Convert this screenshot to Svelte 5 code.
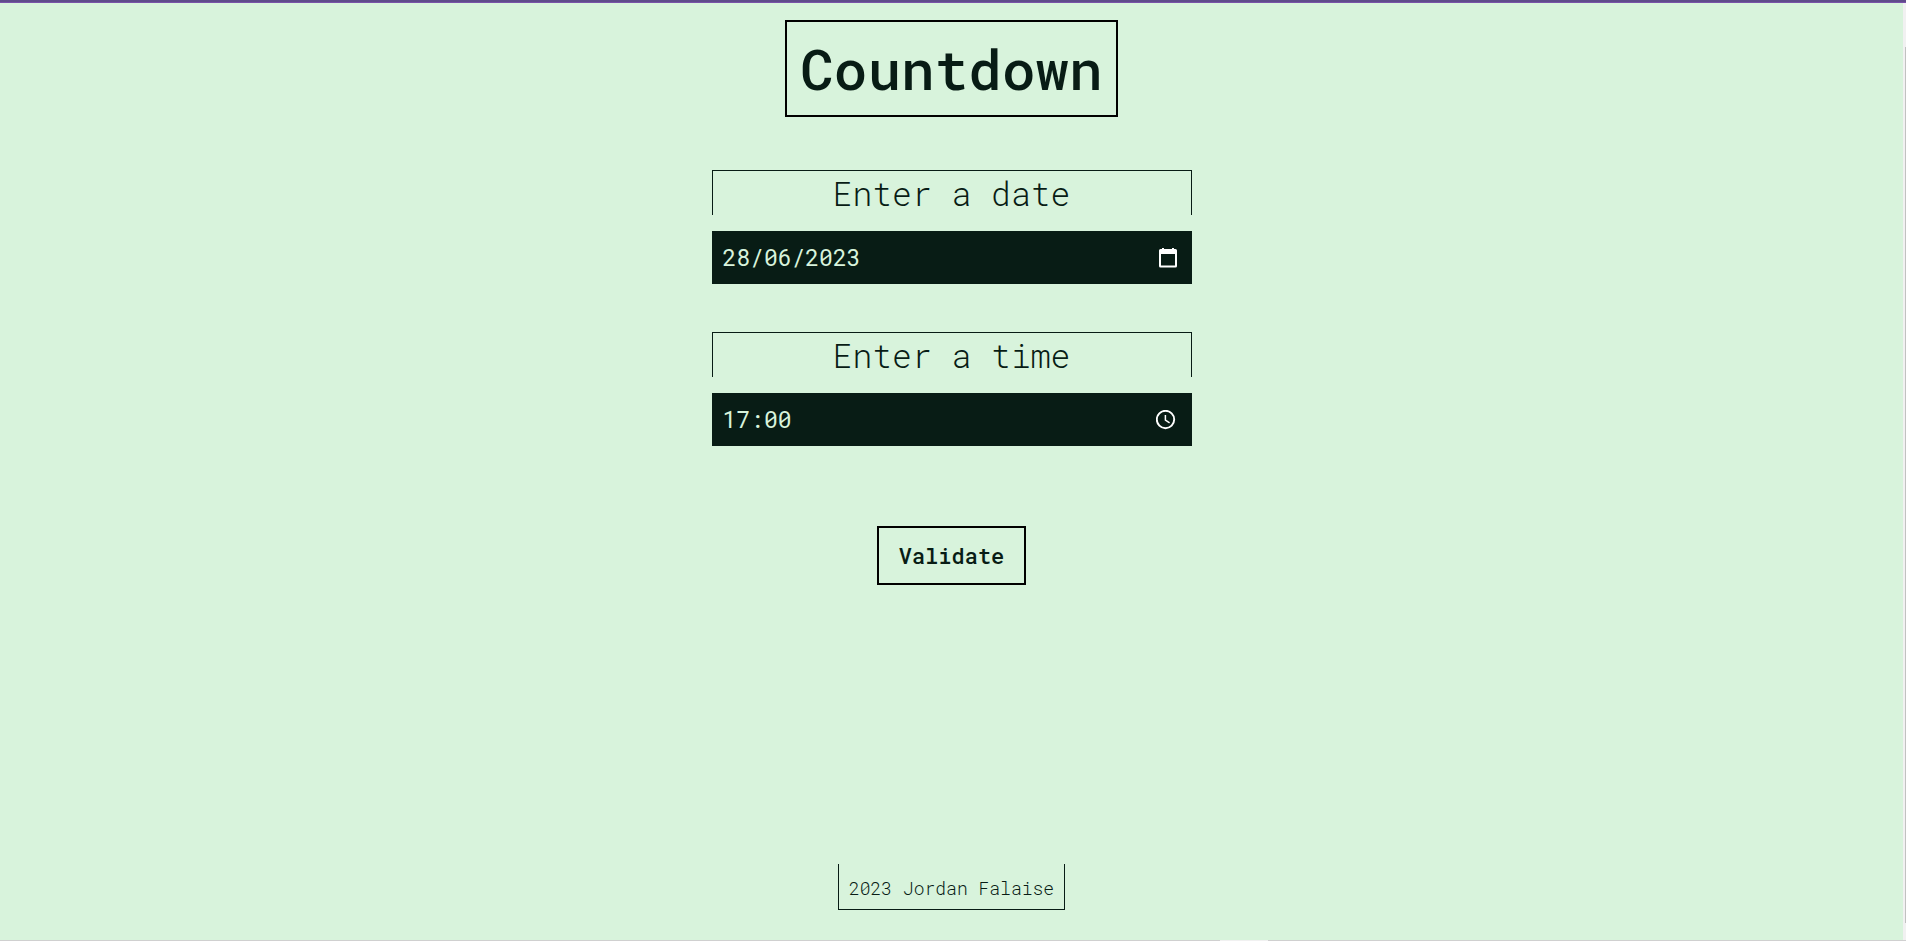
<script>
  let date = $state('28/06/2023');
  let time = $state('17:00');
</script>

<div class="page">
  <div class="topbar"></div>
  <div class="view">
    <div class="content">
      <header><h1>Countdown</h1></header>
      <main>
        <form onsubmit={(e) => e.preventDefault()}>
          <div class="group">
            <label for="date">Enter a date</label>
            <div class="field">
              <input id="date" type="text" bind:value={date} />
              <button type="button" class="picker calendar" aria-label="Choose a date">
                <svg viewBox="0 0 18 20" width="18" height="20">
                  <path fill="#fff" fill-rule="evenodd" d="M3 0h2v1h8V0h2v1h1.5Q18 1 18 2.5v15.5Q18 19.500 16.500 19.500h-15Q0 19.500 0 18V2.500Q0 1 1.500 1H3zM2 6v11.500h14V6z" />
                </svg>
              </button>
            </div>
          </div>
          <div class="group">
            <label for="time">Enter a time</label>
            <div class="field">
              <input id="time" type="text" bind:value={time} />
              <button type="button" class="picker clock" aria-label="Choose a time">
                <svg viewBox="0 0 20 20" width="20" height="20" fill="none" stroke="#fff">
                  <circle cx="9.500" cy="9.500" r="8.700" stroke-width="1.900" />
                  <path d="M9.400 5v5.200l4.200 2.600" stroke-width="1.500" />
                </svg>
              </button>
            </div>
          </div>
          <button type="submit" class="validate">Validate</button>
        </form>
      </main>
      <footer><p>2023 Jordan Falaise</p></footer>
    </div>
    <div class="track"><div class="thumb"></div></div>
  </div>
  <div class="bottombar"><span></span></div>
</div>

<style>
  :global(body) {
    margin: 0;
    background: #d8f3dc;
  }
  .page {
    display: flex;
    flex-direction: column;
    min-height: 100vh;
    color: #081c15;
    font-family: "Roboto Mono", "Liberation Mono", monospace;
  }
  .topbar {
    height: 2px;
    background: #5f4b8b;
    border-bottom: 1px solid #7951a8;
  }
  .view {
    display: flex;
    flex: 1;
  }
  .content {
    display: flex;
    flex: 1;
    flex-direction: column;
    align-items: center;
    padding: 17px 16px 30px;
  }
  h1 {
    margin: 0;
    padding: 10px 13px;
    border: 2px solid #000;
    font-size: 56px;
    font-weight: 500;
    line-height: 73px;
  }
  main {
    flex: 1;
    width: 100%;
    max-width: 480px;
    padding-top: 53px;
  }
  form {
    display: flex;
    flex-direction: column;
    align-items: center;
    gap: 48px;
  }
  .group {
    display: flex;
    flex-direction: column;
    gap: 16px;
    width: 100%;
  }
  label {
    border: 1px solid #081c15;
    border-bottom: 0;
    padding-top: 1px;
    font-size: 33px;
    font-weight: 350;
    line-height: 43px;
    text-align: center;
  }
  .field {
    display: flex;
    align-items: center;
    background: #081c15;
  }
  input {
    flex: 1;
    min-width: 0;
    padding: 12px 11px;
    border: 0;
    background: transparent;
    color: #d8f3dc;
    font: 400 23px/29px "Roboto Mono", "Liberation Mono", monospace;
  }
  .picker {
    display: flex;
    padding: 0;
    border: 0;
    background: transparent;
  }
  .calendar {
    margin-right: 15px;
  }
  .clock {
    margin-right: 16px;
  }
  .validate {
    margin-top: 32px;
    padding: 13px 20px;
    border: 2px solid #000;
    background: transparent;
    color: #081c15;
    font: 500 22px/29px "Roboto Mono", "Liberation Mono", monospace;
  }
  footer p {
    margin: 0;
    padding: 12px 10px 8px;
    border: 1px solid #081c15;
    border-top: 0;
    font-size: 18px;
    font-weight: 350;
    line-height: 25px;
  }
  .track {
    display: flex;
    width: 3px;
    padding: 44px 0 17px;
    box-sizing: border-box;
    justify-content: flex-end;
    background: #f1f1f1;
  }
  .thumb {
    width: 1px;
    background: #c1c1c1;
  }
  .bottombar {
    display: flex;
    height: 1px;
    background: #d0d0d0;
  }
  .bottombar span {
    width: 48px;
    margin-left: 64%;
    background: #f1f1f1;
  }
</style>
